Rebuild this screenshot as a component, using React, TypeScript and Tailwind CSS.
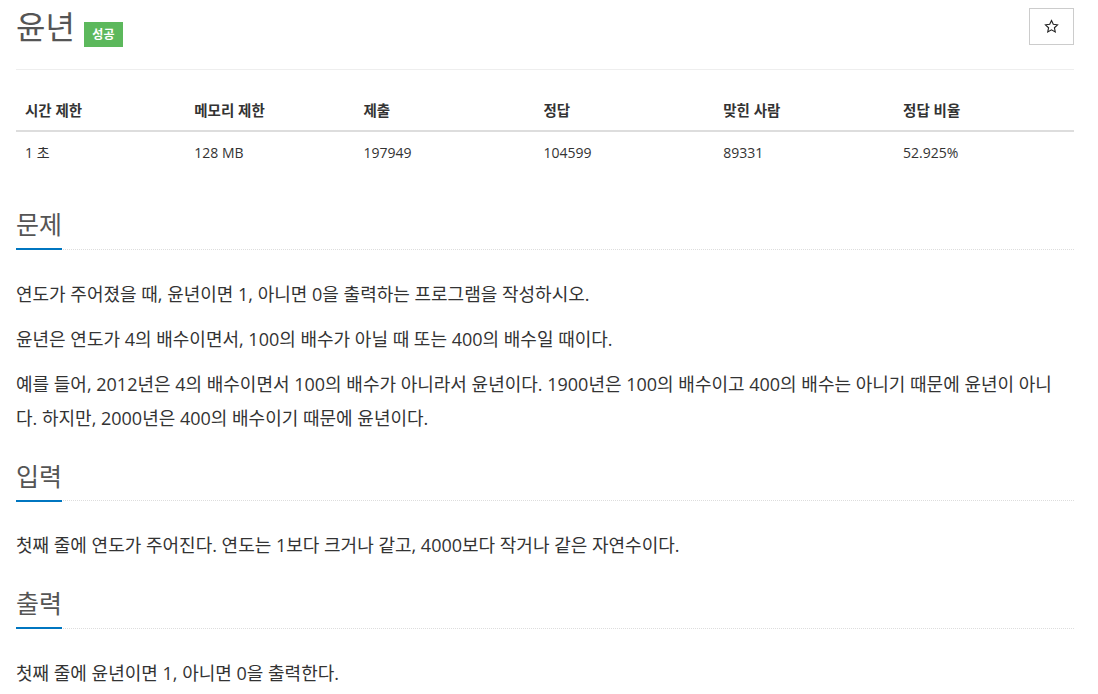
const stats = [
  { label: "시간 제한", value: "1 초", w: "w-[16%]" },
  { label: "메모리 제한", value: "128 MB", w: "w-[16%]" },
  { label: "제출", value: "197949", w: "w-[17%]" },
  { label: "정답", value: "104599", w: "w-[17%]" },
  { label: "맞힌 사람", value: "89331", w: "w-[17%]" },
  { label: "정답 비율", value: "52.925%", w: "w-[17%]" },
];

const sections = [
  {
    title: "문제",
    mt: "mt-[35px]",
    paragraphs: [
      "연도가 주어졌을 때, 윤년이면 1, 아니면 0을 출력하는 프로그램을 작성하시오.",
      "윤년은 연도가 4의 배수이면서, 100의 배수가 아닐 때 또는 400의 배수일 때이다.",
      "예를 들어, 2012년은 4의 배수이면서 100의 배수가 아니라서 윤년이다. 1900년은 100의 배수이고 400의 배수는 아니기 때문에 윤년이 아니다. 하지만, 2000년은 400의 배수이기 때문에 윤년이다.",
    ],
  },
  {
    title: "입력",
    mt: "mt-[25px]",
    paragraphs: [
      "첫째 줄에 연도가 주어진다. 연도는 1보다 크거나 같고, 4000보다 작거나 같은 자연수이다.",
    ],
  },
  {
    title: "출력",
    mt: "mt-[25px]",
    paragraphs: ["첫째 줄에 윤년이면 1, 아니면 0을 출력한다."],
  },
];

function StarIcon() {
  return (
    <svg width="15" height="15" viewBox="0 0 16 16" fill="none">
      <path
        d="M8 1.6l1.9 4.1 4.5.5-3.3 3.1.9 4.5L8 11.6l-4 2.2.9-4.5L1.6 6.2l4.5-.5z"
        stroke="#222"
        strokeWidth="1.2"
        strokeLinejoin="miter"
      />
    </svg>
  );
}

function Section({
  title,
  mt,
  paragraphs,
}: {
  title: string;
  mt: string;
  paragraphs: string[];
}) {
  return (
    <section className={mt}>
      <h2 className="flex border-b border-dotted border-[#ddd]">
        <span className="-mb-[1.5px] inline-block border-b-2 border-[#0076c0] pb-[7px] text-[25px] leading-[33px] font-normal text-[#555]">
          {title}
        </span>
      </h2>
      <div className="mt-[27px] pr-[6px]">
        {paragraphs.map((text, index) => (
          <p
            key={index}
            className="mb-[11px] text-[18px] leading-[34px] text-[#333] last:mb-0"
          >
            {text}
          </p>
        ))}
      </div>
    </section>
  );
}

export default function App() {
  return (
    <div className="min-h-screen bg-white font-['Open_Sans','Noto_Sans_CJK_KR',sans-serif] text-[#333]">
      <div className="ml-4 w-[1058px] pt-2">
        <div className="flex items-start justify-between">
          <div className="flex items-start">
            <h1 className="text-[32px] leading-[37px] font-normal text-[#555]">
              윤년
            </h1>
            <span className="mt-[14px] ml-[9px] flex h-[25px] w-[39px] items-center justify-center bg-[#5cb85c] text-[12px] font-bold text-white">
              성공
            </span>
          </div>
          <button className="flex h-[37px] w-[45px] items-center justify-center border border-[#ccc] bg-white">
            <StarIcon />
          </button>
        </div>

        <div className="mt-[22px] border-t border-[#eee]" />

        <div className="mt-[20px]">
          <div className="flex h-[42px] items-center border-b-2 border-[#ddd] pt-[1px]">
            {stats.map((item) => (
              <div
                key={item.label}
                className={`${item.w} px-[9px] text-[14.5px] font-bold text-[#333]`}
              >
                {item.label}
              </div>
            ))}
          </div>
          <div className="flex h-[41px] items-center">
            {stats.map((item) => (
              <div
                key={item.label}
                className={`${item.w} px-[9px] text-[14px] text-[#333]`}
              >
                {item.value}
              </div>
            ))}
          </div>
        </div>

        {sections.map((s) => (
          <Section key={s.title} title={s.title} mt={s.mt} paragraphs={s.paragraphs} />
        ))}
      </div>
    </div>
  );
}
